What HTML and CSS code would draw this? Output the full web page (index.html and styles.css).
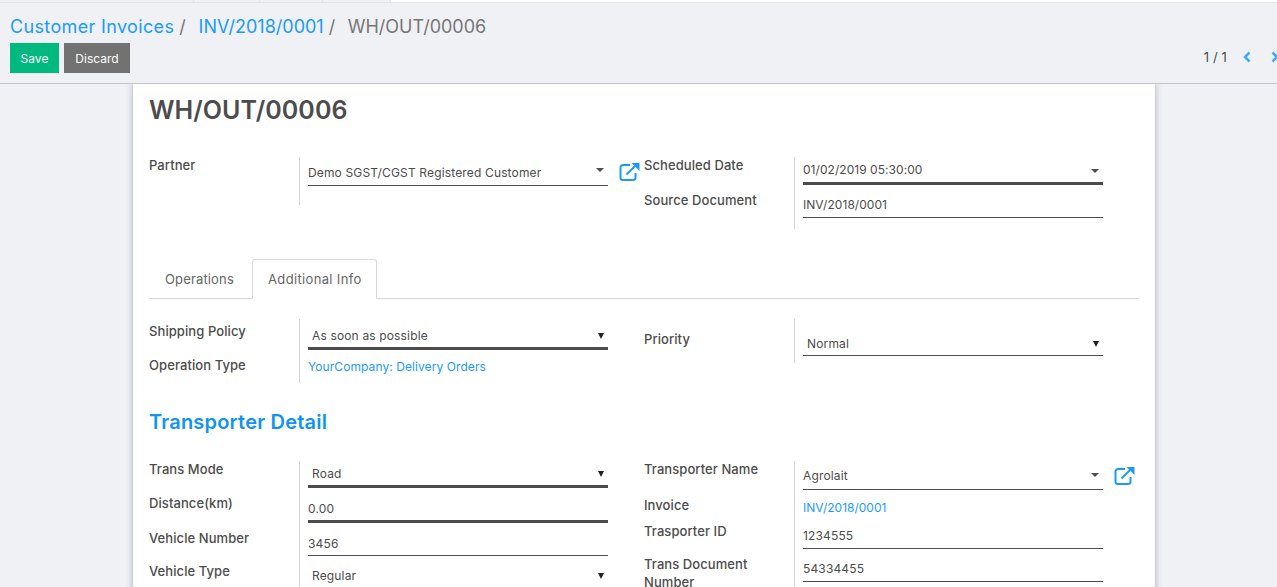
FILE: index.html
```html
<!DOCTYPE html>
<html>
  <head>
    <title>WH/OUT/00006</title>
    <link rel="stylesheet" href="styles.css">
  </head>
  <body>
    <div class="topbar">
      <span class="top-cell top-first"></span>
      <span class="top-cell top-a"></span>
      <span class="top-cell top-b"></span>
      <span class="top-cell top-c"></span>
      <span class="top-rest"></span>
    </div>
    <div class="control-panel">
      <ol class="breadcrumb">
        <li class="first"><a href="#">Customer Invoices</a></li>
        <li><a href="#">INV/2018/0001</a></li>
        <li class="active">WH/OUT/00006</li>
      </ol>
      <div class="actions">
        <div class="buttons">
          <button class="btn btn-save">Save</button>
          <button class="btn btn-discard">Discard</button>
        </div>
        <div class="pager">
          <span class="pager-count">1 / 1</span>
          <svg class="chevron" width="10" height="12" viewBox="0 0 10 12"><path d="M7.500 1.500 3 6l4.500 4.500"/></svg>
          <svg class="chevron" width="10" height="12" viewBox="0 0 10 12"><path d="M2.500 1.500 7 6l-4.500 4.500"/></svg>
        </div>
      </div>
    </div>

    <div class="sheet">
      <h1 class="title">WH/OUT/00006</h1>

      <div class="group group-top">
        <div class="col">
          <div class="row row-partner">
            <label>Partner</label>
            <div class="val">
              <div class="field field-m2o">Demo SGST/CGST Registered Customer<i class="caret"></i></div>
              <svg class="ext" width="22" height="20" viewBox="0 0 22 20"><path d="M11 3H4a2.500 2.500 0 0 0-2.500 2.500v10A2.500 2.500 0 0 0 4 18h10a2.500 2.500 0 0 0 2.500-2.500V11"/><path d="M7.500 12.500 17 3"/><path class="head" d="M12.500 1H20.500V9z"/></svg>
            </div>
          </div>
        </div>
        <div class="col">
          <div class="row row-date">
            <label>Scheduled Date</label>
            <div class="val">
              <div class="field field-thick">01/02/2019 05:30:00<i class="caret"></i></div>
            </div>
          </div>
          <div class="row row-source">
            <label>Source Document</label>
            <div class="val">
              <div class="field">INV/2018/0001</div>
            </div>
          </div>
        </div>
      </div>

      <div class="tabs">
        <a class="tab" href="#">Operations</a>
        <a class="tab tab-active" href="#">Additional Info</a>
      </div>

      <div class="group group-info">
        <div class="col">
          <div class="row row-policy">
            <label>Shipping Policy</label>
            <div class="val">
              <div class="field field-thick field-select">As soon as possible<i class="arrow"></i></div>
            </div>
          </div>
          <div class="row row-optype">
            <label>Operation Type</label>
            <div class="val"><a class="link" href="#">YourCompany: Delivery Orders</a></div>
          </div>
        </div>
        <div class="col">
          <div class="row row-priority">
            <label>Priority</label>
            <div class="val">
              <div class="field field-select">Normal<i class="arrow"></i></div>
            </div>
          </div>
        </div>
      </div>

      <h2 class="section">Transporter Detail</h2>

      <div class="group">
        <div class="col">
          <div class="row row-mode">
            <label>Trans Mode</label>
            <div class="val">
              <div class="field field-thick field-select">Road<i class="arrow"></i></div>
            </div>
          </div>
          <div class="row row-distance">
            <label>Distance(km)</label>
            <div class="val"><div class="field field-thick">0.00</div></div>
          </div>
          <div class="row row-vehicle">
            <label>Vehicle Number</label>
            <div class="val"><div class="field">3456</div></div>
          </div>
          <div class="row row-type">
            <label>Vehicle Type</label>
            <div class="val">
              <div class="field field-select">Regular<i class="arrow"></i></div>
            </div>
          </div>
        </div>
        <div class="col">
          <div class="row row-transporter">
            <label>Transporter Name</label>
            <div class="val">
              <div class="field field-m2o">Agrolait<i class="caret"></i></div>
              <svg class="ext" width="22" height="20" viewBox="0 0 22 20"><path d="M11 3H4a2.500 2.500 0 0 0-2.500 2.500v10A2.500 2.500 0 0 0 4 18h10a2.500 2.500 0 0 0 2.500-2.500V11"/><path d="M7.500 12.500 17 3"/><path class="head" d="M12.500 1H20.500V9z"/></svg>
            </div>
          </div>
          <div class="row row-invoice">
            <label>Invoice</label>
            <div class="val"><a class="link" href="#">INV/2018/0001</a></div>
          </div>
          <div class="row row-tid">
            <label>Trasporter ID</label>
            <div class="val"><div class="field">1234555</div></div>
          </div>
          <div class="row row-doc">
            <label>Trans Document Number</label>
            <div class="val"><div class="field">54334455</div></div>
          </div>
        </div>
      </div>
    </div>
  </body>
</html>
```
FILE: styles.css
```css
html, body {
  margin: 0;
  height: 587px;
  overflow: hidden;
}

body {
  background-color: #f0f1f5;
  color: #4c4c4c;
  font-family: "Inter", "Liberation Sans", sans-serif;
  font-size: 12px;
  letter-spacing: 0.15px;
}

a {
  color: #1a9bfc;
  text-decoration: none;
}

.topbar {
  display: flex;
  box-sizing: border-box;
  height: 3px;
  border-bottom: 1px solid #e2e3e7;
}

.top-cell {
  border-right: 1px solid #e2e3e7;
}

.top-first { width: 193px; }
.top-a { width: 65px; }
.top-b { width: 62px; }
.top-c { width: 67px; }

.top-rest {
  flex: 1;
  background-color: #fff;
}

.control-panel {
  position: relative;
  z-index: 1;
  box-sizing: border-box;
  height: 81px;
  padding: 13px 0 0 10px;
  background-color: #f0f1f5;
  border-bottom: 1px solid #c3c3d0;
}

.breadcrumb {
  display: flex;
  list-style: none;
  margin: 0;
  padding: 0;
  font-size: 18px;
  letter-spacing: 0;
  line-height: 22px;
}

.breadcrumb .first {
  letter-spacing: 0.35px;
}

.breadcrumb li:not(.active)::after {
  content: "/";
  color: #777;
  margin: 0 12.500px 0 5px;
}

.breadcrumb .active {
  color: #777;
}

.actions {
  display: flex;
  justify-content: space-between;
  margin-top: 5px;
}

.buttons {
  display: flex;
  gap: 5px;
}

.btn {
  height: 30px;
  border: none;
  color: #fff;
  font-family: inherit;
  font-size: 12px;
}

.btn-save {
  width: 49px;
  padding: 0;
  background-color: #00b97f;
}

.btn-discard {
  width: 66px;
  padding: 0;
  background-color: #727272;
}

.pager {
  display: flex;
  align-items: center;
  gap: 18px;
  height: 28px;
  margin-right: -3px;
}

.pager-count {
  font-size: 13px;
  margin-right: -3px;
}

.chevron {
  fill: none;
  stroke: #3fa9f5;
  stroke-width: 2.5;
}

.sheet {
  box-sizing: border-box;
  width: 1022px;
  height: 520px;
  margin-left: 133px;
  padding: 0 16px;
  background-color: #fff;
  box-shadow: 0 0 6px rgba(60, 60, 90, 0.4);
}

.title {
  margin: 0;
  padding-top: 10px;
  font-size: 25px;
  font-weight: 600;
  letter-spacing: 0.05px;
  line-height: 33px;
}

.group {
  display: flex;
  align-items: flex-start;
}

.group-top {
  margin-top: 30px;
}

.col {
  width: 495px;
  flex: none;
}

.row {
  display: flex;
  align-items: stretch;
}

.row label {
  box-sizing: border-box;
  width: 150px;
  flex: none;
  margin-top: -1px;
  font-size: 13px;
  font-weight: 500;
  letter-spacing: 0.08px;
  line-height: 18px;
}

.val {
  position: relative;
  flex: none;
  width: 300px;
  padding-left: 8px;
  border-left: 1px solid #d4d4d4;
}

.field {
  position: relative;
  box-sizing: border-box;
  width: 300px;
  height: 100%;
  border-bottom: 1px solid #4c4c4c;
  line-height: 16px;
}

.field-thick {
  border-bottom: 3px solid #4c4c4c;
}

.field-select {
  padding-left: 4px;
}

.caret {
  position: absolute;
  right: 4px;
  top: 50%;
  border-top: 4px solid #4c4c4c;
  border-left: 4px solid transparent;
  border-right: 4px solid transparent;
}

.arrow {
  position: absolute;
  right: 4px;
  top: 50%;
  border-top: 6px solid #222;
  border-left: 3px solid transparent;
  border-right: 3px solid transparent;
}

.ext {
  position: absolute;
  left: 319px;
  top: 5px;
  fill: none;
  stroke: #1a9bfc;
  stroke-width: 2;
}

.ext .head {
  fill: #1a9bfc;
  stroke: none;
}

.link {
  display: block;
  letter-spacing: 0.08px;
}

.row-partner .val { height: 48px; }
.row-partner .field { height: 29px; padding-top: 8px; }
.row-partner .caret { top: 11px; }

.row-date .val { height: 36px; }
.row-date .field { height: 28px; padding-top: 5px; letter-spacing: 0.05px; }
.row-date .caret { top: 12px; }
.row-source .val { height: 36px; }
.row-source label { margin-top: -2px; }
.row-source .field { height: 25px; padding-top: 4px; letter-spacing: 0.05px; }

.tabs {
  display: flex;
  box-sizing: border-box;
  height: 40px;
  margin-top: 30px;
  border-bottom: 1px solid #d9d9d9;
  font-size: 13px;
  letter-spacing: 0.15px;
  line-height: 38px;
}

.tab {
  box-sizing: border-box;
  width: 103px;
  padding-left: 15px;
  color: #666;
  border: 1px solid transparent;
  border-bottom: none;
}

.tab-active {
  width: 125px;
  height: 40px;
  background-color: #fff;
  border-color: #d9d9d9;
  border-radius: 3px 3px 0 0;
  letter-spacing: 0.35px;
}

.group-info {
  margin-top: 20px;
}

.row-policy label { padding-top: 4px; }
.row-policy .val { height: 32px; }
.row-policy .field { height: 31px; padding-top: 9px; }
.row-policy .arrow { top: 14px; }
.row-optype label { padding-top: 6px; }
.row-optype .val { height: 24px; padding-top: 8px; }
.row-priority label { padding-top: 12px; }
.row-priority .val { height: 44px; }
.row-priority .field { height: 37px; padding-top: 17px; }
.row-priority .arrow { top: 22px; }

.section {
  margin: 27px 0;
  color: #0f93f5;
  font-size: 20px;
  font-weight: 600;
  letter-spacing: 0.2px;
  line-height: 24px;
}

.row-mode .val { height: 34px; }
.row-mode .field { height: 27px; padding-top: 5px; }
.row-mode .arrow { top: 10px; }
.row-distance .val { height: 34px; }
.row-distance .field { height: 28px; padding-top: 6px; }
.row-vehicle label { padding-top: 1px; }
.row-vehicle .val { height: 34px; }
.row-vehicle .field { height: 27px; padding-top: 7px; }
.row-type .val { height: 40px; }
.row-type .field { border-bottom: none; padding-top: 5px; }
.row-type .arrow { top: 10px; }

.row-transporter .val { height: 36px; }
.row-transporter .field { height: 29px; padding-top: 7px; }
.row-transporter .caret { top: 12px; }
.row-invoice .val { height: 24px; }
.row-invoice .link { padding-top: 3px; letter-spacing: 0; }
.row-tid label { padding-top: 2px; }
.row-tid .val { height: 28px; }
.row-tid .field { height: 28px; padding-top: 7px; }
.row-doc label { padding-top: 7px; }
.row-doc .val { height: 60px; }
.row-doc .field { height: 33px; padding-top: 12px; }
```
